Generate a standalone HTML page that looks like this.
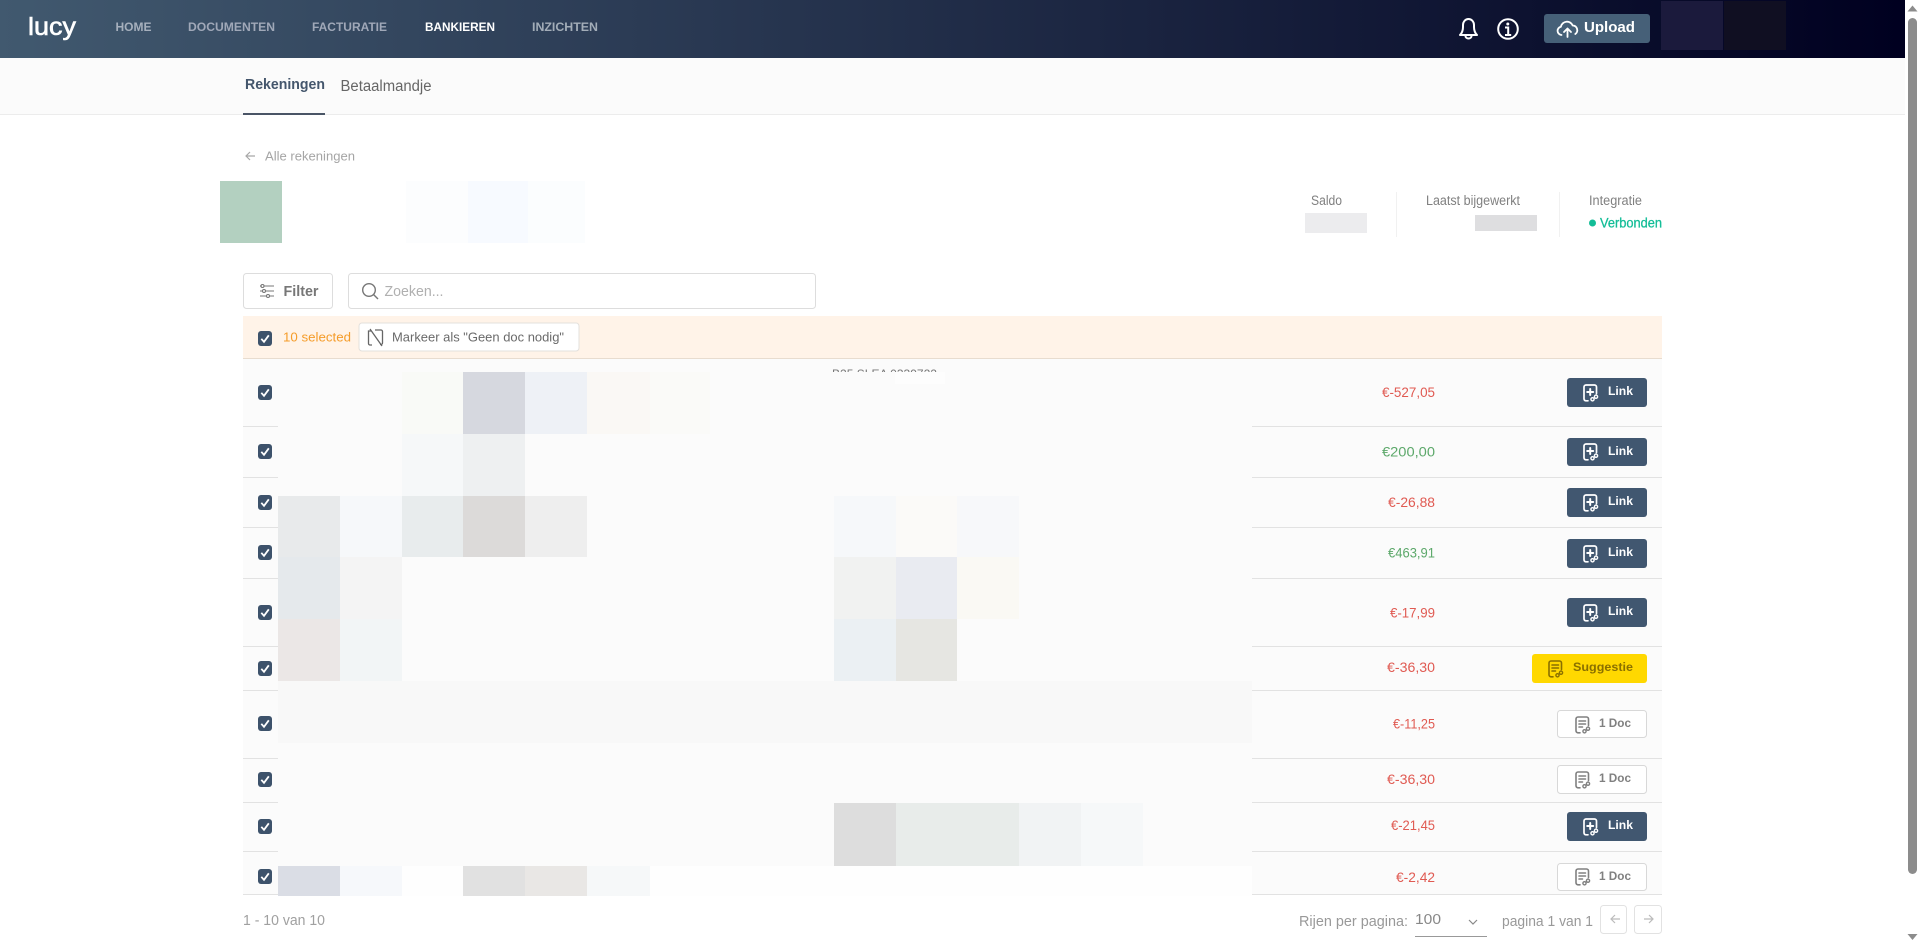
<!DOCTYPE html>
<html lang="nl"><head><meta charset="utf-8"><title>Lucy</title>
<style>html,body{margin:0;padding:0;background:#fff;overflow:hidden;width:1920px;height:945px}svg{display:block}text{font-family:"Liberation Sans",sans-serif}.b{font-weight:700}</style></head><body>
<svg xmlns="http://www.w3.org/2000/svg" width="1920" height="945" viewBox="0 0 1920 945">
<defs>
<linearGradient id="hd" x1="0" x2="1" y1="0" y2="0"><stop offset="0" stop-color="#41596f"/><stop offset="1" stop-color="#000020"/></linearGradient>
<symbol id="cb" width="14" height="15" viewBox="0 0 14 15"><rect width="14" height="15" rx="3" fill="#3d526b"/><path d="M3.3 7.800 6 10.800 10.800 4.300" fill="none" stroke="#fff" stroke-width="1.800"/></symbol>
<symbol id="il" width="16" height="18" viewBox="0 0 16 18"><g fill="none" stroke="#fff" stroke-width="1.700" stroke-linecap="round"><path d="M5 16.800H3A2 2 0 0 1 1 14.800V3A2 2 0 0 1 3 1H11.500A2 2 0 0 1 13.500 3V9.500"/><path d="M7.200 5v6M4.200 8h6" stroke-width="2"/><circle cx="9.500" cy="15.300" r="1.600" stroke-width="1.400"/><circle cx="13" cy="12.700" r="1.600" stroke-width="1.400"/></g></symbol>
<symbol id="id" width="16" height="18" viewBox="0 0 16 18"><g fill="none" stroke="currentColor" stroke-width="1.600" stroke-linecap="round"><path d="M5 16.800H3A2 2 0 0 1 1 14.800V3A2 2 0 0 1 3 1H11.500A2 2 0 0 1 13.500 3V9.500"/><path d="M4 5h6.500M4 8h6.500M4 11h3.500"/><circle cx="9.500" cy="15.300" r="1.600" stroke-width="1.400"/><circle cx="13" cy="12.700" r="1.600" stroke-width="1.400"/></g></symbol>
</defs>

<!-- header -->
<rect width="1905" height="58" fill="url(#hd)"/>
<text x="28" y="35" font-size="25" fill="#fff" stroke="#fff" stroke-width=".6" textLength="48" lengthAdjust="spacingAndGlyphs">lucy</text>
<g font-size="12" class="b">
<text x="115.500" y="31" fill="#a6b0bd" textLength="36" lengthAdjust="spacingAndGlyphs">HOME</text>
<text x="188" y="31" fill="#a0a8b8" textLength="87" lengthAdjust="spacingAndGlyphs">DOCUMENTEN</text>
<text x="312" y="31" fill="#a0a8b8" textLength="75" lengthAdjust="spacingAndGlyphs">FACTURATIE</text>
<text x="425" y="31" fill="#fff" textLength="70" lengthAdjust="spacingAndGlyphs">BANKIEREN</text>
<text x="532" y="31" fill="#a3adb8" textLength="66" lengthAdjust="spacingAndGlyphs">INZICHTEN</text>
</g>
<g fill="none" stroke="#fff" stroke-width="2">
<path d="M1460 35c2-2 3-4 3-8v-2a5.500 6 0 0 1 11 0v2c0 4 1 6 3 8z" stroke-linejoin="round"/>
<path d="M1465.500 36a3 2.500 0 0 0 6 0"/>
<circle cx="1508" cy="29" r="9.800"/>
<path d="M1505 27.500h3.200V35M1505 35h6.200"/>
</g>
<circle cx="1507.800" cy="24" r="1.500" fill="#fff"/>
<rect x="1544" y="14" width="106" height="29" rx="3" fill="#466078"/>
<g fill="none" stroke="#fff" stroke-width="1.800" stroke-linecap="round" stroke-linejoin="round"><path d="M1561.500 35a4.200 4.200 0 0 1-.6-8.300 6.200 6.200 0 0 1 11.800-1.200 4.700 4.700 0 0 1 2.600 8.500"/><path d="M1567.500 37v-8M1564 32l3.500-3.500 3.500 3.500"/></g>
<text x="1584" y="32" font-size="14.500" fill="#fff" class="b" textLength="51" lengthAdjust="spacingAndGlyphs">Upload</text>
<rect x="1661" y="1" width="62" height="49" fill="#1b1a3c"/>
<rect x="1724" y="1" width="62" height="49" fill="#100f22"/>

<!-- sub nav -->
<rect y="58" width="1905" height="56" fill="#fbfbfb"/>
<rect y="114" width="1905" height="1" fill="#ececec"/>
<text x="245" y="89" font-size="15" fill="#44566c" class="b" textLength="80" lengthAdjust="spacingAndGlyphs">Rekeningen</text>
<text x="340.500" y="91" font-size="15.500" fill="#666" textLength="91" lengthAdjust="spacingAndGlyphs">Betaalmandje</text>
<rect x="243" y="113" width="82" height="2" fill="#4a5566"/>

<!-- back -->
<path d="M255 156h-9M250 152l-4 4 4 4" fill="none" stroke="#a8a8a8" stroke-width="1.200"/>
<text x="265" y="160.500" font-size="13" fill="#a5a5a5" textLength="90" lengthAdjust="spacingAndGlyphs">Alle rekeningen</text>

<!-- account -->
<rect x="220" y="181" width="62" height="62" fill="#b3d0c0"/>
<rect x="406" y="181" width="62" height="62" fill="#fcfdfe"/>
<rect x="468" y="181" width="60" height="62" fill="#f7faff"/>
<rect x="528" y="181" width="57" height="62" fill="#fbfdfe"/>
<g font-size="13.500" fill="#808080">
<text x="1311" y="205" textLength="31" lengthAdjust="spacingAndGlyphs">Saldo</text>
<text x="1426" y="205" textLength="94" lengthAdjust="spacingAndGlyphs">Laatst bijgewerkt</text>
<text x="1589" y="205" textLength="53" lengthAdjust="spacingAndGlyphs">Integratie</text>
</g>
<rect x="1305" y="213" width="62" height="20" fill="#ececee"/>
<rect x="1475" y="215" width="62" height="16" fill="#dedee0"/>
<rect x="1396" y="192" width="1" height="45" fill="#f1f1f1"/>
<rect x="1559" y="192" width="1" height="45" fill="#f1f1f1"/>
<circle cx="1592.500" cy="223" r="3.500" fill="#13bd97"/>
<text x="1600" y="227.500" font-size="13.500" fill="#13bd97" stroke="#13bd97" stroke-width=".3" textLength="62" lengthAdjust="spacingAndGlyphs">Verbonden</text>

<!-- filter/search -->
<rect x="243.500" y="273.500" width="89" height="35" rx="3" fill="#fff" stroke="#ddd"/>
<g fill="none" stroke="#777" stroke-width="1.100"><path d="M264 286h10M260 291h2M266 291h8M260 296h6M270 296h4M260 286h1"/><circle cx="262.500" cy="286" r="1.500"/><circle cx="264" cy="291" r="1.500"/><circle cx="268" cy="296" r="1.500"/></g>
<text x="283.500" y="296" font-size="14.500" fill="#777" class="b" textLength="35" lengthAdjust="spacingAndGlyphs">Filter</text>
<rect x="348.500" y="273.500" width="467" height="35" rx="3" fill="#fff" stroke="#ddd"/>
<g fill="none" stroke="#777" stroke-width="1.400"><circle cx="369" cy="290" r="6.300"/><path d="M373.500 294.500l4.500 4.500"/></g>
<text x="384.500" y="296" font-size="15" fill="#b0b0b0" textLength="59" lengthAdjust="spacingAndGlyphs">Zoeken...</text>

<!-- selected bar -->
<rect x="243" y="316" width="1419" height="42" fill="#fff3e8"/>
<rect x="243" y="358" width="1419" height="1" fill="#e8dccf"/>
<use href="#cb" x="258" y="331"/>
<text x="283" y="341.500" font-size="13" fill="#f59c2a" textLength="68" lengthAdjust="spacingAndGlyphs">10 selected</text>
<rect x="359" y="323" width="220" height="28" rx="3" fill="#fff" stroke="#e3e0dc"/>
<g fill="none" stroke="#666" stroke-width="1.300"><path d="M372 345h-2a1.500 1.500 0 0 1-1.500-1.500V331h3M375 330h6a1.500 1.500 0 0 1 1.500 1.500V343a1.500 1.500 0 0 1-1.500 1.500h-1M370 329l12 17"/></g>
<text x="392" y="341.500" font-size="13" fill="#6a6a6a" textLength="172" lengthAdjust="spacingAndGlyphs">Markeer als "Geen doc nodig"</text>

<!-- rows -->
<rect x="243" y="359" width="1419" height="535" fill="#fbfbfb"/>
<g fill="#e2e2e2">
<rect x="243" y="426" width="1419" height="1"/><rect x="243" y="477" width="1419" height="1"/><rect x="243" y="527" width="1419" height="1"/><rect x="243" y="578" width="1419" height="1"/><rect x="243" y="646" width="1419" height="1"/><rect x="243" y="690" width="1419" height="1"/><rect x="243" y="758" width="1419" height="1"/><rect x="243" y="802" width="1419" height="1"/><rect x="243" y="851" width="1419" height="1"/><rect x="243" y="894" width="1419" height="1"/>
</g>
<text x="832" y="378" font-size="12" fill="#777" textLength="105" lengthAdjust="spacingAndGlyphs">B25 SLEA 0339722</text>

<!-- redaction mosaic -->
<rect x="278" y="372" width="974" height="494" fill="#fbfbfb"/>
<rect x="278" y="866" width="974" height="30" fill="#fefefe"/>
<rect x="895" y="372" width="50" height="12" fill="#fdfdfd"/>
<g>
<rect x="402" y="372" width="61" height="62" fill="#f9faf7"/><rect x="463" y="372" width="62" height="62" fill="#d6d8df"/><rect x="525" y="372" width="62" height="62" fill="#eef1f6"/><rect x="587" y="372" width="63" height="62" fill="#faf8f5"/><rect x="650" y="372" width="60" height="62" fill="#fafaf8"/>
<rect x="402" y="434" width="61" height="62" fill="#f6f8f9"/><rect x="463" y="434" width="62" height="62" fill="#eef0f1"/>
<rect x="278" y="496" width="62" height="61" fill="#e8eaeb"/><rect x="340" y="496" width="62" height="61" fill="#f6f8fa"/><rect x="402" y="496" width="61" height="61" fill="#e8eced"/><rect x="463" y="496" width="62" height="61" fill="#dcdad9"/><rect x="525" y="496" width="62" height="61" fill="#eeeeee"/>
<rect x="834" y="496" width="62" height="61" fill="#f6f8fa"/><rect x="896" y="496" width="61" height="61" fill="#fbfaf8"/><rect x="957" y="496" width="62" height="61" fill="#f7f8fa"/>
<rect x="278" y="557" width="62" height="62" fill="#e5e9ec"/><rect x="340" y="557" width="62" height="62" fill="#f4f4f4"/>
<rect x="834" y="557" width="62" height="62" fill="#f1f2f1"/><rect x="896" y="557" width="61" height="62" fill="#e9ebf1"/><rect x="957" y="557" width="62" height="62" fill="#faf9f4"/>
<rect x="278" y="619" width="62" height="62" fill="#ebe7e6"/><rect x="340" y="619" width="62" height="62" fill="#f2f5f6"/>
<rect x="834" y="619" width="62" height="62" fill="#ebf0f3"/><rect x="896" y="619" width="61" height="62" fill="#e6e6e2"/>
<rect x="278" y="681" width="974" height="62" fill="#f8f8f8"/>
<rect x="834" y="803" width="62" height="63" fill="#dddddd"/><rect x="896" y="803" width="61" height="63" fill="#e8ecea"/><rect x="957" y="803" width="62" height="63" fill="#e8ecea"/><rect x="1019" y="803" width="62" height="63" fill="#f1f3f4"/><rect x="1081" y="803" width="62" height="63" fill="#f6f8f9"/>
<rect x="278" y="866" width="62" height="30" fill="#dadde5"/><rect x="340" y="866" width="62" height="30" fill="#f6f8fb"/><rect x="463" y="866" width="62" height="30" fill="#e1e1e1"/><rect x="525" y="866" width="62" height="30" fill="#e9e7e5"/><rect x="587" y="866" width="63" height="30" fill="#f6f8f9"/>
</g>

<!-- checkboxes -->
<use href="#cb" x="258" y="385"/><use href="#cb" x="258" y="444"/><use href="#cb" x="258" y="495"/><use href="#cb" x="258" y="545"/><use href="#cb" x="258" y="605"/><use href="#cb" x="258" y="661"/><use href="#cb" x="258" y="716"/><use href="#cb" x="258" y="772"/><use href="#cb" x="258" y="819"/><use href="#cb" x="258" y="869"/>

<!-- amounts -->
<g font-size="13.500">
<text x="1382" y="397" fill="#e05a52" textLength="53" lengthAdjust="spacingAndGlyphs">€-527,05</text>
<text x="1382" y="456.500" fill="#5ca86a" textLength="53" lengthAdjust="spacingAndGlyphs">€200,00</text>
<text x="1388" y="507" fill="#e05a52" textLength="47" lengthAdjust="spacingAndGlyphs">€-26,88</text>
<text x="1388" y="557.500" fill="#5ca86a" textLength="47" lengthAdjust="spacingAndGlyphs">€463,91</text>
<text x="1390" y="617.500" fill="#e05a52" textLength="45" lengthAdjust="spacingAndGlyphs">€-17,99</text>
<text x="1387" y="672" fill="#e05a52" textLength="48" lengthAdjust="spacingAndGlyphs">€-36,30</text>
<text x="1393" y="728.500" fill="#e05a52" textLength="42" lengthAdjust="spacingAndGlyphs">€-11,25</text>
<text x="1387" y="784" fill="#e05a52" textLength="48" lengthAdjust="spacingAndGlyphs">€-36,30</text>
<text x="1391" y="830" fill="#e05a52" textLength="44" lengthAdjust="spacingAndGlyphs">€-21,45</text>
<text x="1396" y="882" fill="#e05a52" textLength="39" lengthAdjust="spacingAndGlyphs">€-2,42</text>
</g>

<!-- buttons -->
<g fill="#415770">
<rect x="1567" y="378" width="80" height="29" rx="3"/><rect x="1567" y="438" width="80" height="28" rx="3"/><rect x="1567" y="488" width="80" height="29" rx="3"/><rect x="1567" y="539" width="80" height="29" rx="3"/><rect x="1567" y="598" width="80" height="29" rx="3"/><rect x="1567" y="812" width="80" height="29" rx="3"/>
</g>
<use href="#il" x="1583" y="384"/><use href="#il" x="1583" y="443"/><use href="#il" x="1583" y="494"/><use href="#il" x="1583" y="545"/><use href="#il" x="1583" y="604"/><use href="#il" x="1583" y="818"/>
<g font-size="12" fill="#fff" class="b">
<text x="1608" y="395" textLength="25" lengthAdjust="spacingAndGlyphs">Link</text>
<text x="1608" y="455" textLength="25" lengthAdjust="spacingAndGlyphs">Link</text>
<text x="1608" y="505" textLength="25" lengthAdjust="spacingAndGlyphs">Link</text>
<text x="1608" y="556" textLength="25" lengthAdjust="spacingAndGlyphs">Link</text>
<text x="1608" y="615" textLength="25" lengthAdjust="spacingAndGlyphs">Link</text>
<text x="1608" y="829" textLength="25" lengthAdjust="spacingAndGlyphs">Link</text>
</g>
<rect x="1532" y="654" width="115" height="29" rx="3" fill="#ffd800"/>
<use href="#id" x="1548" y="660" style="color:#8a7000"/>
<text x="1573" y="671" font-size="12" fill="#8a7000" class="b" textLength="60" lengthAdjust="spacingAndGlyphs">Suggestie</text>
<g fill="#fff" stroke="#d8d8d8"><rect x="1557.500" y="710.500" width="89" height="27" rx="3"/><rect x="1557.500" y="765.500" width="89" height="28" rx="3"/><rect x="1557.500" y="863.500" width="89" height="27" rx="3"/></g>
<use href="#id" x="1575" y="716" style="color:#808080"/><use href="#id" x="1575" y="771" style="color:#808080"/><use href="#id" x="1575" y="868" style="color:#808080"/>
<g font-size="12" fill="#808080" class="b">
<text x="1599" y="727" textLength="32" lengthAdjust="spacingAndGlyphs">1 Doc</text>
<text x="1599" y="782" textLength="32" lengthAdjust="spacingAndGlyphs">1 Doc</text>
<text x="1599" y="880" textLength="32" lengthAdjust="spacingAndGlyphs">1 Doc</text>
</g>

<!-- footer -->
<text x="243" y="925" font-size="14.500" fill="#a0a0a0" textLength="82" lengthAdjust="spacingAndGlyphs">1 - 10 van 10</text>
<text x="1299" y="926" font-size="14.500" fill="#999" textLength="109" lengthAdjust="spacingAndGlyphs">Rijen per pagina:</text>
<text x="1415" y="924" font-size="14.500" fill="#888" textLength="26" lengthAdjust="spacingAndGlyphs">100</text>
<path d="M1469 920l4 4 4-4" fill="none" stroke="#888" stroke-width="1.200"/>
<rect x="1415" y="936" width="72" height="1" fill="#999"/>
<text x="1502" y="926" font-size="14.500" fill="#999" textLength="91" lengthAdjust="spacingAndGlyphs">pagina 1 van 1</text>
<rect x="1600.500" y="905.500" width="26" height="28" rx="3" fill="#fff" stroke="#e2e2e2"/>
<rect x="1634.500" y="905.500" width="27" height="28" rx="3" fill="#fff" stroke="#e2e2e2"/>
<path d="M1620 919h-9M1615 915l-4 4 4 4M1644 919h9M1649 915l4 4-4 4" fill="none" stroke="#bbb" stroke-width="1.200"/>

<!-- scrollbar -->
<rect x="1908" y="18" width="9" height="856" rx="4.500" fill="#8c8c8c"/>
<path d="M1907.500 11.500L1912.500 5.500L1917.500 11.500z" fill="#8c8c8c"/>
<path d="M1907.500 934L1912.500 940L1917.500 934z" fill="#8c8c8c"/>
</svg>
</body></html>
